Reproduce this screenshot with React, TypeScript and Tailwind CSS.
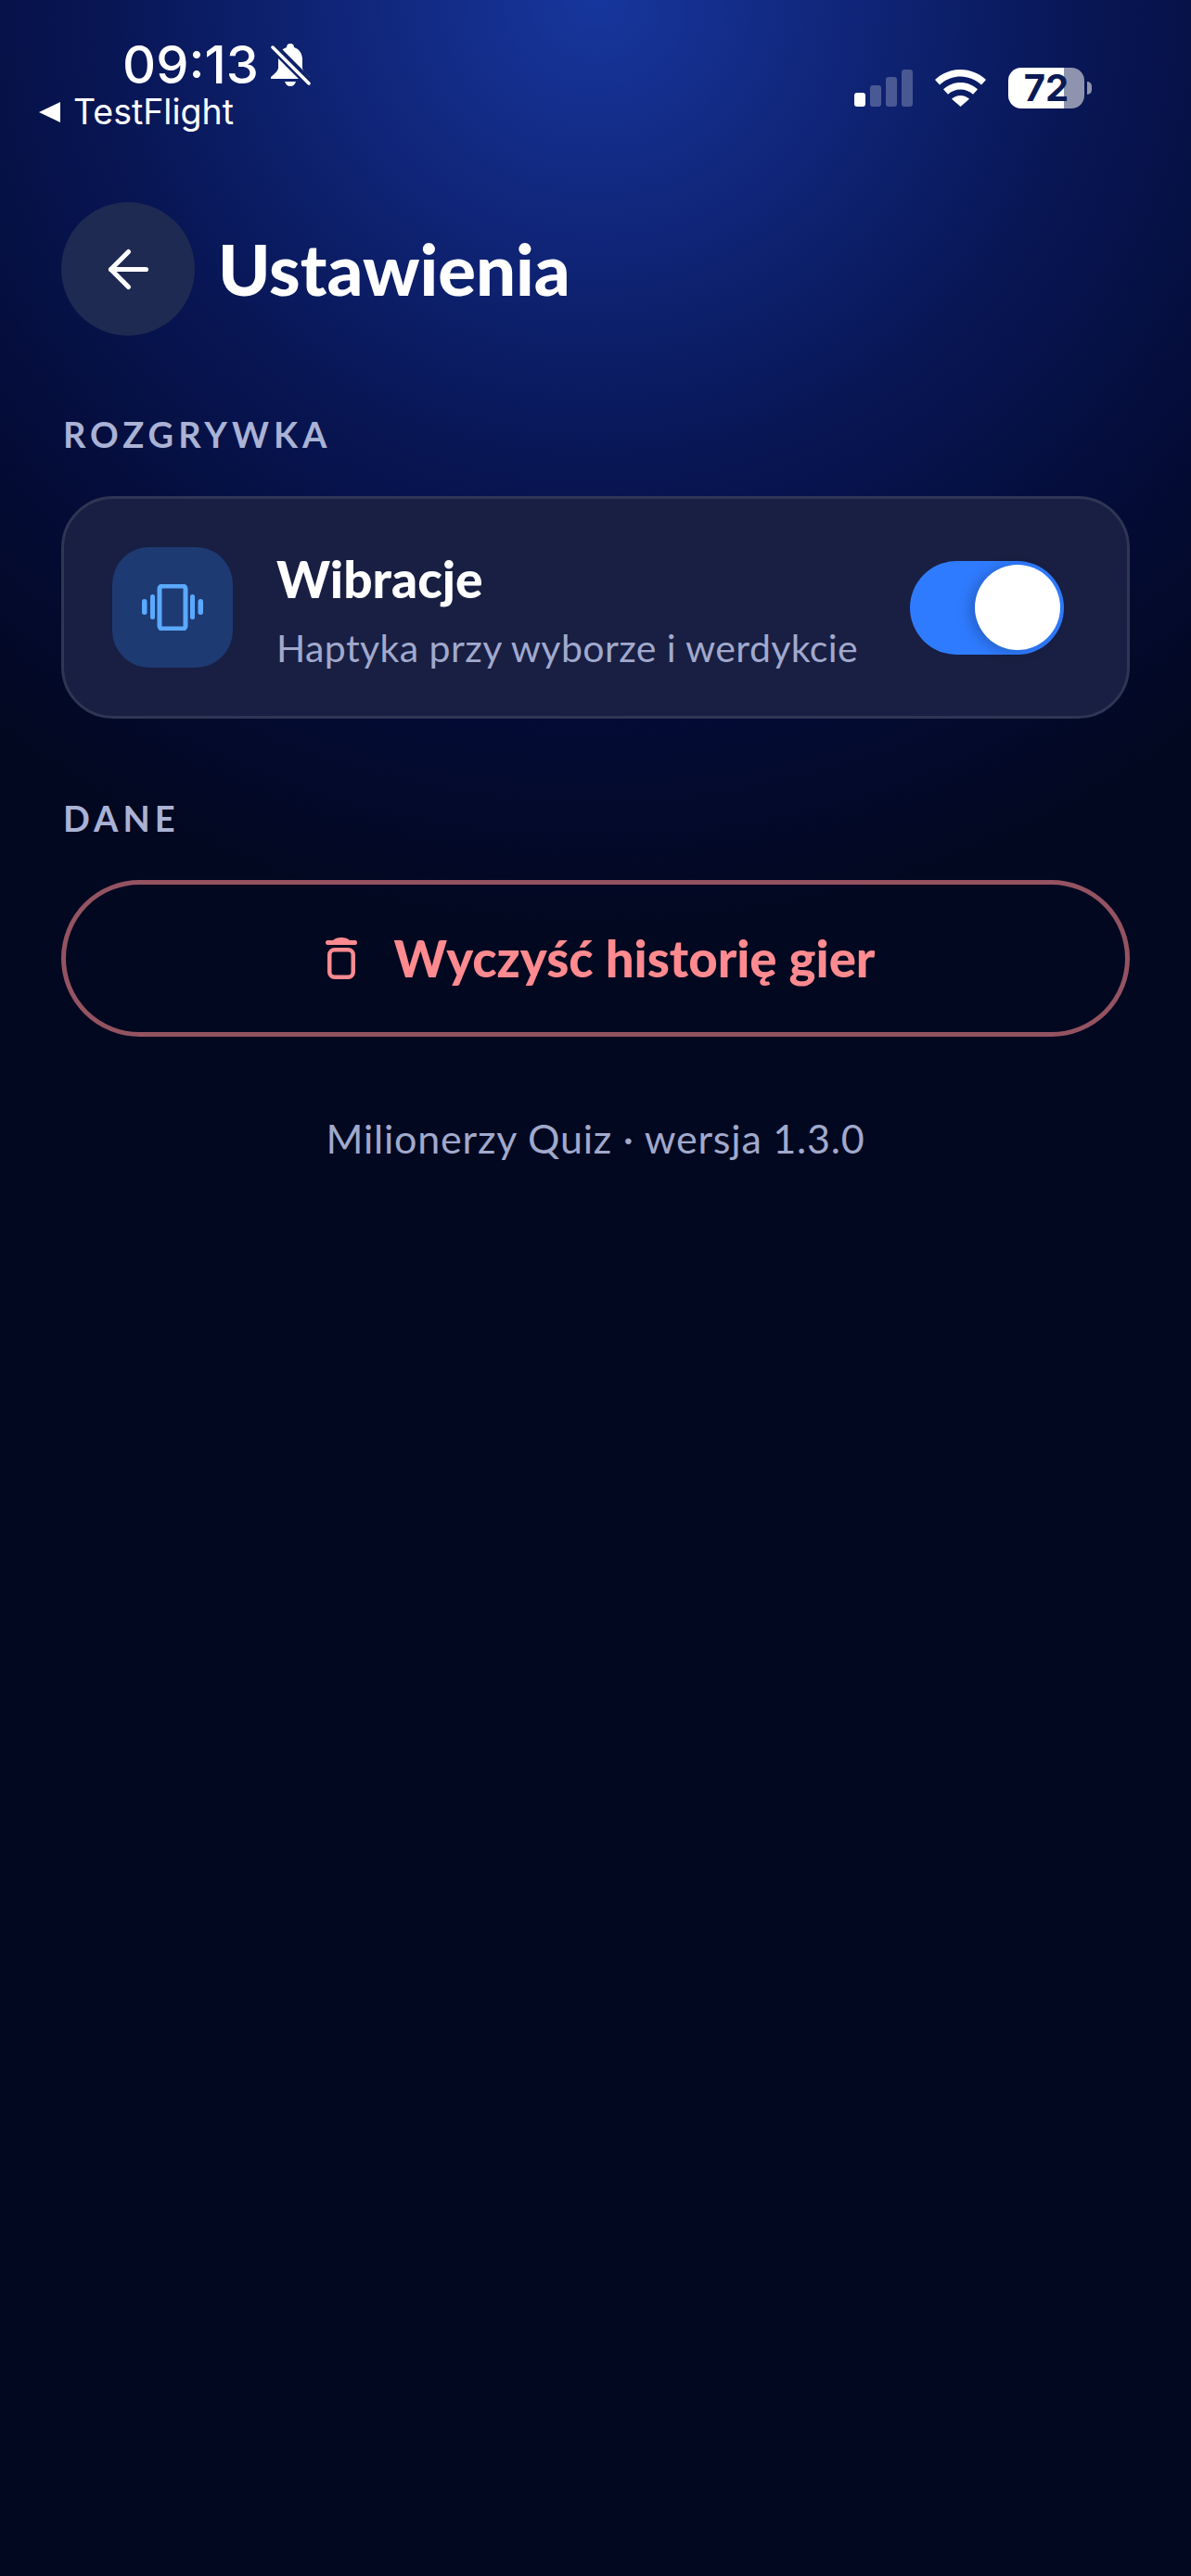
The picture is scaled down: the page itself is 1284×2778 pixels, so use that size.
import { ArrowLeft } from "lucide-react";

const HEAD = "font-['Lato','Noto_Sans',sans-serif]";
const BODY = "font-['Lato','Open_Sans',sans-serif]";

const BellOff = () => (
	<svg viewBox="0 0 44 46" className="w-[44px] h-[46px] ml-[13px]" fill="#fff">
		<path d="M21 0c3 0 4 2 4 4 6 2 9 7 9 14v8c0 3 4 7 8 10v2H0v-2c4-3 8-7 8-10v-8c0-7 3-12 9-14 0-2 1-4 4-4z" />
		<path d="M15 41h12c-1 3-3 5-6 5s-5-2-6-5z" />
		<path d="M1 2l42 42" stroke="#0f2268" strokeWidth="10" />
		<path d="M2 4l39 39" stroke="#fff" strokeWidth="3.500" strokeLinecap="round" />
	</svg>
);

const SIGNAL = [
	{ id: "s1", h: "h-[15px]", c: "bg-white" },
	{ id: "s2", h: "h-[23px]", c: "bg-white/25" },
	{ id: "s3", h: "h-[32px]", c: "bg-white/25" },
	{ id: "s4", h: "h-[40px]", c: "bg-white/25" },
];

const Wifi = () => (
	<svg viewBox="0 0 55 40" className="w-[55px] h-[40px] ml-[24px]" fill="#fff">
		<path d="M27.500 0C17 0 7.500 4 0 11l5 5.500C11 11 19 7.500 27.500 7.500S44 11 50 16.500L55 11C47.500 4 38 0 27.500 0z" />
		<path d="M27.500 14c-7 0-13.500 2.700-18.500 7.300l5 5.500c3.500-3.300 8.300-5.300 13.500-5.300S37.500 23.500 41 26.800l5-5.500C41 16.700 34.500 14 27.500 14z" />
		<path d="M27.500 28c-3.700 0-7 1.400-9.500 3.700L27.500 40 37 31.700C34.500 29.400 31.200 28 27.500 28z" />
	</svg>
);

const Vibrate = () => (
	<svg viewBox="0 0 66 50" className="w-[66px] h-[50px]" fill="none">
		<rect x="19" y="2" width="28" height="46" rx="3" stroke="#5aa9ff" strokeWidth="5" />
		<rect x="9" y="11" width="5" height="27" rx="2.500" fill="#5aa9ff" />
		<rect x="52" y="11" width="5" height="27" rx="2.500" fill="#5aa9ff" />
		<rect x="0" y="16" width="5.500" height="17" rx="2.700" fill="#5aa9ff" />
		<rect x="60.500" y="16" width="5.500" height="17" rx="2.700" fill="#5aa9ff" />
	</svg>
);

const Trash = () => (
	<svg viewBox="0 0 34 45" className="w-[34px] h-[45px] mr-[40px]" fill="none">
		<path d="M2 3h6c2-2 5-3 9-3s7 1 9 3h6c1.200 0 2 1 2 2.500S33.200 8 32 8H2C.800 8 0 7 0 5.500S.800 3 2 3z" fill="#ff8a8f" />
		<rect x="4.250" y="13.250" width="25.500" height="29.500" rx="5.500" stroke="#ff8a8f" strokeWidth="4.500" />
	</svg>
);

const SectionLabel = ({ children, className }: { children: string; className: string }) => (
	<div className={`${HEAD} pl-[2px] text-[38px] leading-[44px] font-bold tracking-[5px] text-[#aab2d5] ${className}`}>
		{children}
	</div>
);

export default function App() {
	return (
		<div className="w-[1284px] min-h-[2778px] bg-[#020820] bg-[radial-gradient(ellipse_1050px_1000px_at_642px_0px,#17369d_0%,#10267a_25%,#081655_50%,#040c38_75%,#020820_100%)] text-white">
			{/* status bar */}
			<div className="flex justify-between items-start h-[218px]">
				<div className="pl-[42px] pt-[39px]">
					<div className="flex items-center pl-[90px] h-[62px]">
						<span className="font-['Inter',sans-serif] text-[56px] leading-[62px] font-medium">09:13</span>
						<BellOff />
					</div>
					<div className="flex items-center h-[40px]">
						<span className="w-0 h-0 border-y-[11px] border-y-transparent border-r-[23px] border-r-white" />
						<span className="font-['Inter',sans-serif] text-[37.500px] leading-[40px] ml-[14px]">TestFlight</span>
					</div>
				</div>
				<div className="flex items-center pr-[107px] pt-[73px]">
					<div className="flex items-end gap-[5px] h-[40px]">
						{SIGNAL.map((s) => (
							<div key={s.id} className={`w-[12px] rounded-[3px] ${s.h} ${s.c}`} />
						))}
					</div>
					<Wifi />
					<div className="ml-[24px] w-[82px] h-[44px] rounded-[14px] bg-[linear-gradient(90deg,#ffffff_73%,#8e94ad_73%)] flex items-center justify-center font-['Inter',sans-serif] text-[40px] font-bold text-[#0b1a55]">
						72
					</div>
					<div className="ml-[3px] w-[5px] h-[14px] rounded-r-full bg-[#8e94ad]" />
				</div>
			</div>

			<div className="px-[66px]">
				{/* header */}
				<div className="flex items-center">
					<div className="w-[144px] h-[144px] rounded-full bg-[#1f2a52] flex items-center justify-center">
						<ArrowLeft className="w-[65px] h-[65px]" strokeWidth={1.9} />
					</div>
					<h1 className={`${HEAD} ml-[25px] text-[76px] leading-none font-black`}>Ustawienia</h1>
				</div>

				<SectionLabel className="mt-[84px]">ROZGRYWKA</SectionLabel>

				{/* vibration row */}
				<div className="mt-[45px] h-[240px] rounded-[56px] border-[3px] border-[#2f3654] bg-[#181f42] flex items-center pl-[52px] pr-[68px]">
					<div className="w-[130px] h-[130px] rounded-[40px] bg-[#1e3a72] flex items-center justify-center shrink-0">
						<Vibrate />
					</div>
					<div className="ml-[47px] flex-1 pt-[8px]">
						<div className={`${HEAD} text-[55px] leading-[60px] font-black -mt-[2px]`}>Wibracje</div>
						<div className={`${BODY} mt-[21px] text-[41px] leading-[48px] tracking-[0.4px] text-[#a1a9cc]`}>
							Haptyka przy wyborze i werdykcie
						</div>
					</div>
					<div className="w-[166px] h-[101px] rounded-full bg-[#2f7bff] flex items-center justify-end pr-[4px] shrink-0">
						<div className="w-[92px] h-[92px] rounded-full bg-white shadow-[-6px_2px_14px_rgba(0,0,0,0.2)]" />
					</div>
				</div>

				<SectionLabel className="mt-[85px]">DANE</SectionLabel>

				<div className="mt-[45px] h-[169px] pl-[10px] rounded-full border-[5px] border-[#945361] flex items-center justify-center">
					<Trash />
					<span className={`${HEAD} text-[54.500px] font-black text-[#ff8a8f]`}>Wyczyść historię gier</span>
				</div>

				<div className={`${BODY} mt-[86px] text-center text-[43px] leading-[48px] tracking-[0.8px] text-[#a1a9cc]`}>
					Milionerzy Quiz · wersja 1.3.0
				</div>
			</div>
		</div>
	);
}
